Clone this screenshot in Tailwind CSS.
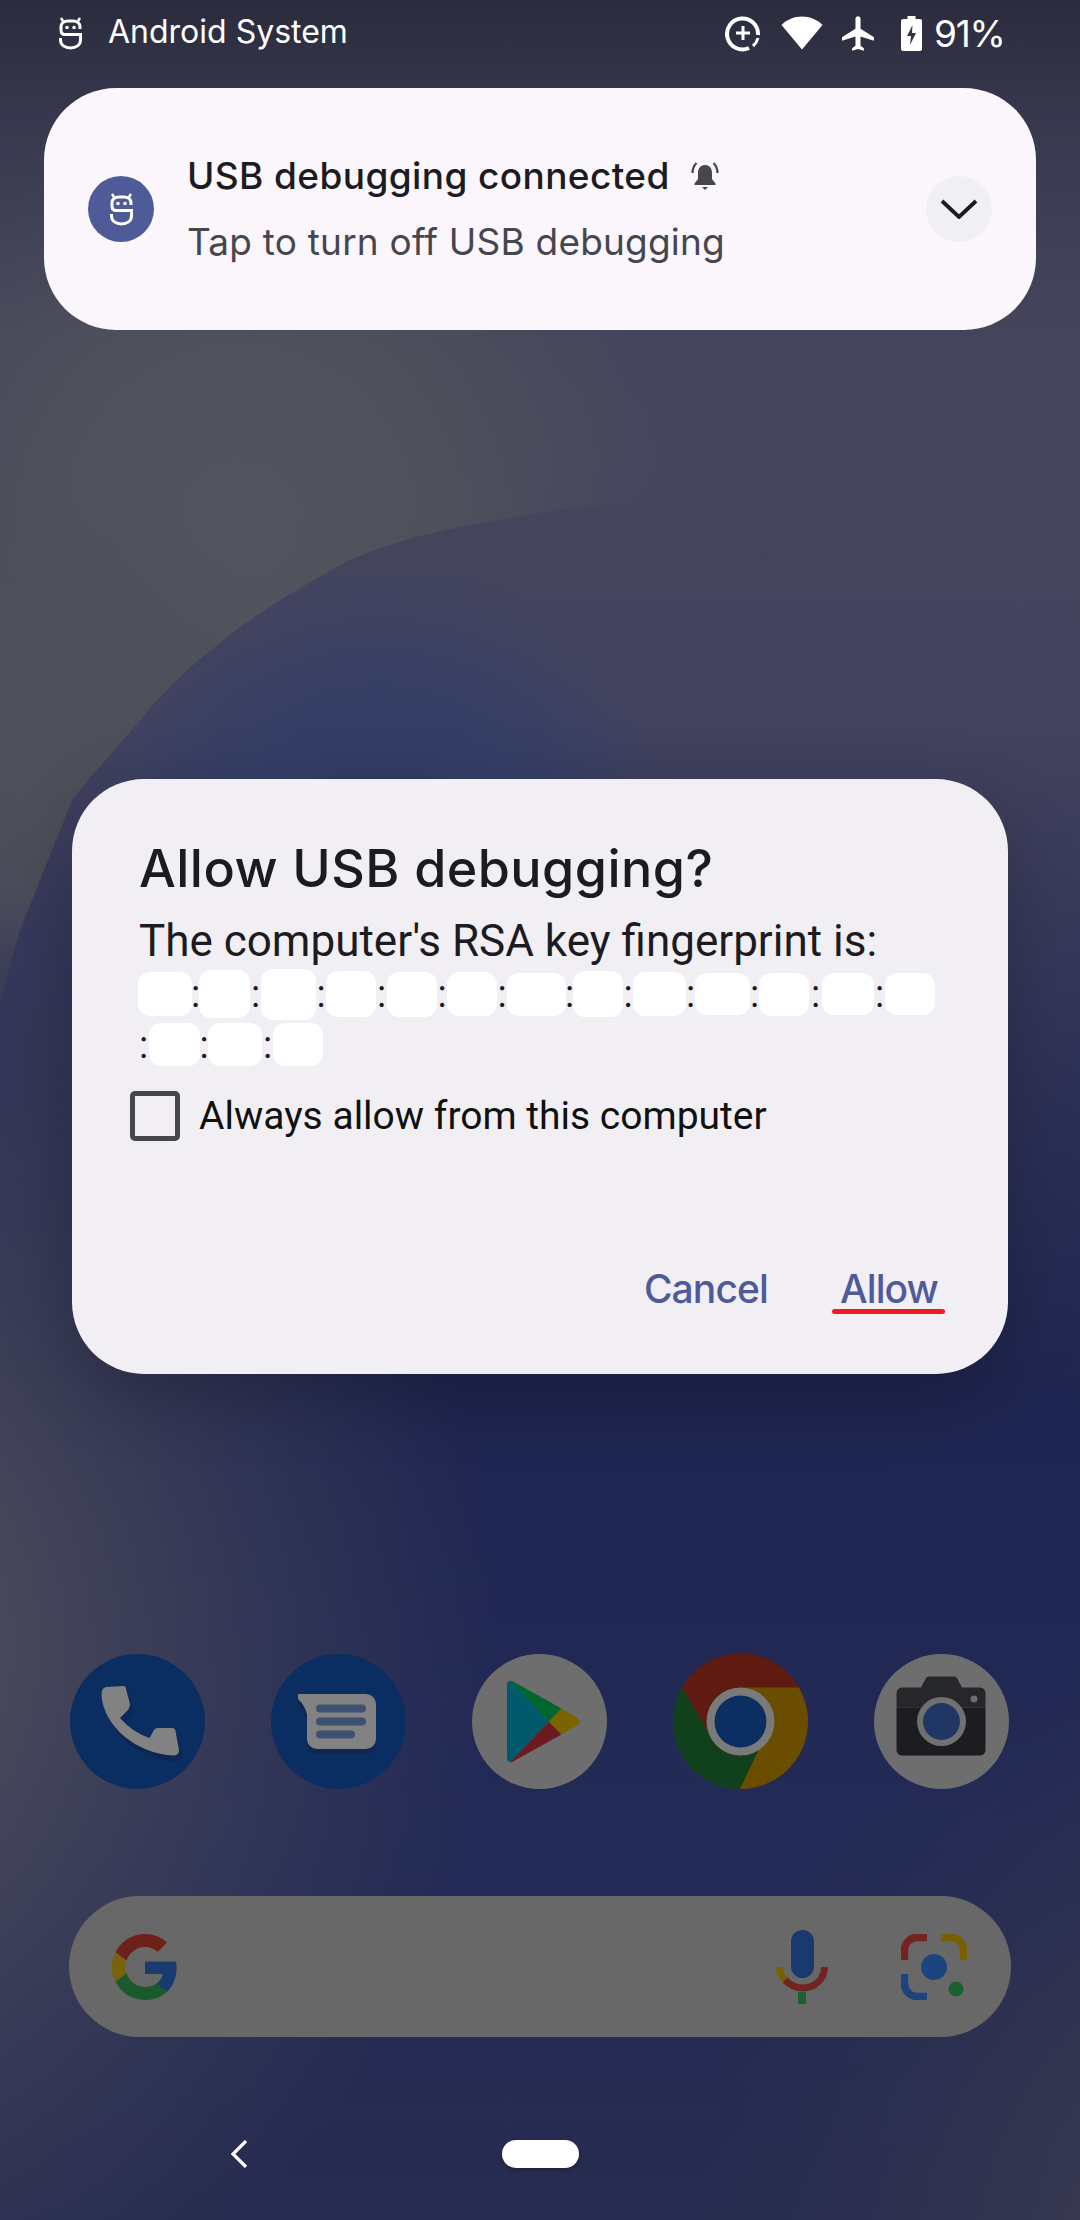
<!DOCTYPE html>
<html lang="en">
<head>
<meta charset="UTF-8">
<meta name="viewport" content="width=device-width, initial-scale=1.0">
<title>Allow USB debugging</title>
<script src="https://cdn.jsdelivr.net/npm/@tailwindcss/browser@4"></script>
</head>
<body class="bg-[#2b2f55]">
<div class="relative w-[1080px] h-[2220px] overflow-hidden font-['Roboto',sans-serif]">

  <!-- wallpaper with scrim -->
  <svg class="absolute inset-0" width="1080" height="2220" viewBox="0 0 1080 2220">
    <defs>
      <linearGradient id="base" x1="0" y1="0" x2="0" y2="1">
        <stop offset="0" stop-color="#42435a"/>
        <stop offset="0.2" stop-color="#45465c"/>
        <stop offset="0.33" stop-color="#42425e"/>
        <stop offset="0.5" stop-color="#2c3056"/>
        <stop offset="0.63" stop-color="#1e2550"/>
        <stop offset="0.82" stop-color="#222a56"/>
        <stop offset="1" stop-color="#272c50"/>
      </linearGradient>
      <linearGradient id="top" x1="0" y1="0" x2="0" y2="1">
        <stop offset="0" stop-color="#2a2b3c"/>
        <stop offset="0.35" stop-color="#2f3044" stop-opacity="0.6"/>
        <stop offset="1" stop-color="#3a3b50" stop-opacity="0"/>
      </linearGradient>
      <radialGradient id="grey" cx="240" cy="520" r="560" gradientUnits="userSpaceOnUse">
        <stop offset="0" stop-color="#54545e"/>
        <stop offset="0.35" stop-color="#52525c" stop-opacity="0.9"/>
        <stop offset="0.8" stop-color="#4c4d5d" stop-opacity="0"/>
      </radialGradient>
      <radialGradient id="greyLow" cx="30" cy="750" r="280" gradientUnits="userSpaceOnUse">
        <stop offset="0" stop-color="#50505a"/>
        <stop offset="0.5" stop-color="#50505a" stop-opacity="0.8"/>
        <stop offset="1" stop-color="#50505a" stop-opacity="0"/>
      </radialGradient>
      <radialGradient id="blue" cx="380" cy="880" r="320" gradientUnits="userSpaceOnUse">
        <stop offset="0" stop-color="#303a68"/>
        <stop offset="0.6" stop-color="#343e68" stop-opacity="0.8"/>
        <stop offset="1" stop-color="#3a4268" stop-opacity="0"/>
      </radialGradient>
      <radialGradient id="edgeL" cx="-260" cy="1640" r="760" gradientUnits="userSpaceOnUse">
        <stop offset="0.3" stop-color="#4a4a5a"/>
        <stop offset="1" stop-color="#45455a" stop-opacity="0"/>
      </radialGradient>
      <radialGradient id="edgeR" cx="1320" cy="2240" r="620" gradientUnits="userSpaceOnUse">
        <stop offset="0.3" stop-color="#3a3a50"/>
        <stop offset="1" stop-color="#30324e" stop-opacity="0"/>
      </radialGradient>
      <clipPath id="curve">
        <path d="M0 0 H1080 V470 C700 490 450 510 344 563 C275 600 200 650 151 707 C120 745 95 770 72 800 L20 930 L0 1000 Z"/>
      </clipPath>
    </defs>
    <rect width="1080" height="2220" fill="url(#base)"/>
    <rect width="1080" height="2220" fill="url(#blue)"/>
    <rect width="1080" height="2220" fill="url(#grey)" clip-path="url(#curve)"/>
    <rect width="1080" height="2220" fill="url(#greyLow)" clip-path="url(#curve)"/>
    <rect width="1080" height="2220" fill="url(#edgeL)"/>
    <rect width="1080" height="2220" fill="url(#edgeR)"/>
    <rect width="1080" height="340" fill="url(#top)"/>
  </svg>

  <div class="relative flex flex-col">
    <!-- status bar -->
    <div class="h-[66px] flex items-center text-white">
      <svg class="ml-[58px] mt-[1px]" width="25" height="33" viewBox="0 0 25 33" fill="none" stroke="#fff" stroke-width="3">
        <path d="M22 12 V10 C22 6 19 4 15 4 H10 C6 4 3 6 3 10 V13 C3 16 4.500 17.500 7 17.500 H22.500 V23 C22.500 28 18 31 12.500 31 C7 31 2.500 28 2.500 23 V21"/>
        <path d="M3 1 L5 4 M22 1 L20 4" stroke-width="2.500"/>
        <circle cx="9" cy="10.500" r="1.800" fill="#fff" stroke="none"/>
        <circle cx="16" cy="10.500" r="1.800" fill="#fff" stroke="none"/>
      </svg>
      <span class="ml-[25px] mb-[3px] text-[32px] leading-none font-['Inter',sans-serif] w-[238px] whitespace-nowrap">Android System</span>
      <svg class="ml-[379px]" width="36" height="38" viewBox="0 0 36 38" fill="none" stroke="#fff" stroke-width="4">
        <path d="M33 21 A15.500 15.500 0 1 0 24 34"/>
        <path d="M33 24 A15.500 15.500 0 0 1 28 32" stroke-width="3"/>
        <path d="M18 12 V26 M11 19 H25" stroke-width="3"/>
      </svg>
      <svg class="ml-[20px]" width="42" height="34" viewBox="0 0 42 34">
        <path d="M21 33.500 L0.500 9 C6 3.500 13 0.500 21 0.500 C29 0.500 36 3.500 41.500 9 Z" fill="#fff"/>
      </svg>
      <svg class="ml-[19px]" width="32" height="35" viewBox="2.500 2 19 20.500">
        <path d="M21.500 16.500 v-2 l-8-5 V3.500 c0-.83-.67-1.500-1.500-1.500 s-1.500.67-1.500 1.500 V9.500 l-8 5 v2 l8-2.500 V19.500 l-2 1.500 v1.500 l3.500-1 3.500 1 V21 l-2-1.500 V14 z" fill="#fff"/>
      </svg>
      <svg class="ml-[27px]" width="21" height="35" viewBox="0 0 21 35">
        <path d="M6.500 0 H14.500 V3 H19 a2 2 0 0 1 2 2 V33 a2 2 0 0 1-2 2 H2 a2 2 0 0 1-2-2 V5 a2 2 0 0 1 2-2 H6.500 Z" fill="#fff"/>
        <path d="M11.500 9 L6 20 H10 L9 29 L15 17 H11 Z" fill="#32344a"/>
      </svg>
      <span class="ml-[12px] text-[37px] leading-none font-['Inter',sans-serif] tracking-[-1.200px]">91%</span>
    </div>

    <!-- notification -->
    <div class="mt-[22px] mx-[44px] h-[242px] rounded-[72px] bg-[#faf6fb] flex items-center">
      <div class="ml-[44px] w-[66px] h-[66px] rounded-full bg-[#4f5b99] flex items-center justify-center">
        <svg width="25" height="33" viewBox="0 0 25 33" fill="none" stroke="#fff" stroke-width="3">
          <path d="M22 12 V10 C22 6 19 4 15 4 H10 C6 4 3 6 3 10 V13 C3 16 4.500 17.500 7 17.500 H22.500 V23 C22.500 28 18 31 12.500 31 C7 31 2.500 28 2.500 23 V21"/>
          <path d="M3 1 L5 4 M22 1 L20 4" stroke-width="2.500"/>
          <circle cx="9" cy="10.500" r="1.800" fill="#fff" stroke="none"/>
          <circle cx="16" cy="10.500" r="1.800" fill="#fff" stroke="none"/>
        </svg>
      </div>
      <div class="ml-[33px] flex-1 flex flex-col gap-[22px]">
        <div class="flex items-center">
          <span class="text-[37px] leading-[44px] font-medium text-[#1c1b1f] font-['Inter',sans-serif] tracking-[0.400px]">USB debugging connected</span>
          <svg class="ml-[20px]" width="30" height="30" viewBox="0 0 30 30">
            <path d="M15 4 C10 4 8 8 8 12 V18 L4.500 22.500 V24 H25.500 V22.500 L22 18 V12 C22 8 20 4 15 4 Z" fill="#46464f"/>
            <path d="M12 26 H18 L15 29 Z" fill="#46464f"/>
            <path d="M6.500 2 C3.500 5 2.500 8 2.500 12 M23.500 2 C26.500 5 27.500 8 27.500 12" fill="none" stroke="#46464f" stroke-width="2.200"/>
          </svg>
        </div>
        <span class="text-[37px] leading-[44px] text-[#46464f] font-['Inter',sans-serif] tracking-[0.200px]">Tap to turn off USB debugging</span>
      </div>
      <div class="mr-[44px] w-[66px] h-[66px] rounded-full bg-[#f0eff3] flex items-center justify-center">
        <svg width="38" height="20" viewBox="0 0 38 20" fill="none" stroke="#1c1b1f" stroke-width="3.800">
          <path d="M2 2 L19 18 L36 2"/>
        </svg>
      </div>
    </div>

    <!-- dialog -->
    <div class="mt-[449px] mx-[72px] h-[595px] rounded-[72px] bg-[#f1eff3] shadow-[0_20px_70px_rgba(0,0,0,0.22)] flex flex-col">
      <h1 class="ml-[67px] mt-[60px] text-[52px] leading-[60px] font-medium text-[#1c1b1f] font-['Inter',sans-serif] tracking-[0.450px]">Allow USB debugging?</h1>
      <p class="ml-[67px] mt-[16px] text-[44px] leading-[52px] text-[#1c1b1f] whitespace-nowrap">The computer's RSA key fingerprint is:</p>
      <div class="ml-[66px] mt-[1px] h-[52px] flex items-center text-[#1c1b1f] text-[38px] leading-none">
        <div class="w-[54px] h-[44px] rounded-[12px] bg-white"></div>
        <span class="w-[7px] flex justify-center">:</span>
        <div class="w-[51px] h-[48px] rounded-[12px] bg-white"></div>
        <span class="w-[11px] flex justify-center">:</span>
        <div class="w-[55px] h-[51px] rounded-[12px] bg-white"></div>
        <span class="w-[10px] flex justify-center">:</span>
        <div class="w-[50px] h-[46px] rounded-[12px] bg-white"></div>
        <span class="w-[11px] flex justify-center">:</span>
        <div class="w-[50px] h-[45px] rounded-[12px] bg-white"></div>
        <span class="w-[10px] flex justify-center">:</span>
        <div class="w-[50px] h-[44px] rounded-[12px] bg-white"></div>
        <span class="w-[10px] flex justify-center">:</span>
        <div class="w-[59px] h-[43px] rounded-[12px] bg-white"></div>
        <span class="w-[7px] flex justify-center">:</span>
        <div class="w-[50px] h-[46px] rounded-[12px] bg-white"></div>
        <span class="w-[10px] flex justify-center">:</span>
        <div class="w-[53px] h-[44px] rounded-[12px] bg-white"></div>
        <span class="w-[9px] flex justify-center">:</span>
        <div class="w-[55px] h-[42px] rounded-[12px] bg-white"></div>
        <span class="w-[9px] flex justify-center">:</span>
        <div class="w-[50px] h-[43px] rounded-[12px] bg-white"></div>
        <span class="w-[13px] flex justify-center">:</span>
        <div class="w-[52px] h-[42px] rounded-[12px] bg-white"></div>
        <span class="w-[11px] flex justify-center">:</span>
        <div class="w-[50px] h-[42px] rounded-[12px] bg-white"></div>
      </div>
      <div class="ml-[66px] mt-[3px] h-[43px] flex items-center text-[#1c1b1f] text-[38px] leading-none">
        <span class="w-[11px] flex justify-center">:</span>
        <div class="w-[51px] h-[43px] rounded-[12px] bg-white"></div>
        <span class="w-[8px] flex justify-center">:</span>
        <div class="w-[54px] h-[43px] rounded-[12px] bg-white"></div>
        <span class="w-[11px] flex justify-center">:</span>
        <div class="w-[50px] h-[43px] rounded-[12px] bg-white"></div>
      </div>
      <div class="ml-[58px] mt-[25px] h-[50px] flex items-center">
        <div class="w-[50px] h-[50px] rounded-[5px] border-[5px] border-[#46464f]"></div>
        <span class="ml-[19px] text-[39px] leading-[46px] text-[#111]">Always allow from this computer</span>
      </div>
      <div class="mt-[125px] flex justify-end mr-[70px]">
        <button class="mr-[72px] text-[39px] leading-[46px] font-medium text-[#4f5b99] font-['Inter',sans-serif] tracking-[-0.900px]">Cancel</button>
        <button class="relative text-[39px] leading-[46px] font-medium text-[#4f5b99] font-['Inter',sans-serif] tracking-[-0.900px]">Allow
          <span class="absolute left-[-8px] right-[-7px] top-[43px] h-[5px] rounded-full bg-[#ed1c24]"></span>
        </button>
      </div>
    </div>

    <!-- dock -->
    <div class="mt-[280px] ml-[70px] flex gap-[66px]">
      <svg width="135" height="135" viewBox="0 0 135 135">
        <circle cx="67.500" cy="67.500" r="67.500" fill="#0a2e62"/>
        <path transform="translate(3 6)" d="M36 33 L53 32 Q56 32 56 35 L60 50 Q60 53 58 56 L50 64 Q62 78 79.500 84 L84 76 Q85 74 88 74 L102 74 Q105 74 105.500 77 L109 96 Q109 101 104 101.500 C66 100 34 72 31.500 42 Q31 34 36 33 Z" fill="#0c2550" opacity="0.8"/>
        <path d="M36 33 L53 32 Q56 32 56 35 L60 50 Q60 53 58 56 L50 64 Q62 78 79.500 84 L84 76 Q85 74 88 74 L102 74 Q105 74 105.500 77 L109 96 Q109 101 104 101.500 C66 100 34 72 31.500 42 Q31 34 36 33 Z" fill="#828282"/>
      </svg>
      <svg width="135" height="135" viewBox="0 0 135 135">
        <circle cx="67.500" cy="67.500" r="67.500" fill="#0a2e62"/>
        <path d="M27 45 H95 a10 10 0 0 1 10 10 V90 a10 10 0 0 1-10 10 H46 a10 10 0 0 1-10-10 V65 Q33 55 27 50 Z" fill="#10264f" opacity="0.8"/>
        <path d="M27 40 H95 a10 10 0 0 1 10 10 V85 a10 10 0 0 1-10 10 H46 a10 10 0 0 1-10-10 V60 Q33 50 27 45 Z" fill="#828282"/>
        <rect x="45" y="50.500" width="50" height="8" rx="4" fill="#3d5170"/>
        <rect x="45" y="63.500" width="50" height="8" rx="4" fill="#3d5170"/>
        <rect x="45" y="76.500" width="39" height="8" rx="4" fill="#3d5170"/>
      </svg>
      <svg width="135" height="135" viewBox="0 0 135 135">
        <circle cx="67.500" cy="67.500" r="67.500" fill="#6e6e6e"/>
        <path d="M35 30 V104 Q35 108 38 108 L77 67.500 L38 27 Q35 27 35 30 Z" fill="#005a6b"/>
        <path d="M38 27 Q39 26 41 27.500 L89.500 54.500 L77 67.500 Z" fill="#00662f"/>
        <path d="M38 108 Q39 109 41 107.500 L89.500 80.500 L77 67.500 Z" fill="#6b1a20"/>
        <path d="M89.500 54.500 L105 63.500 Q110.500 67.500 105 71.500 L89.500 80.500 L77 67.500 Z" fill="#7a6400"/>
      </svg>
      <svg width="135" height="135" viewBox="0 0 135 135">
        <circle cx="67.500" cy="67.500" r="67.500" fill="#6b4d00"/>
        <path d="M9 33.500 A67.500 67.500 0 0 0 67 135 L89 89 L34 75 Z" fill="#10401c"/>
        <path d="M9 33.500 A67.500 67.500 0 0 1 126.500 33.500 H67.500 L34 75 Z" fill="#5f1a12"/>
        <circle cx="67.500" cy="67.500" r="34" fill="#7a7a7a"/>
        <circle cx="67.500" cy="67.500" r="26" fill="#0b2f63"/>
      </svg>
      <svg width="135" height="135" viewBox="0 0 135 135">
        <circle cx="67.500" cy="67.500" r="67.500" fill="#6e6e6e"/>
        <path d="M28 33.500 H47 L52 24 Q53 22.500 55 22.500 H80 Q82 22.500 83 24 L88 33.500 H106 a5.500 5.500 0 0 1 5.500 5.500 V53.500 H22.500 V39 a5.500 5.500 0 0 1 5.500-5.500 Z" fill="#26272a"/>
        <path d="M22.500 53.500 H111.500 V96 a5.500 5.500 0 0 1-5.500 5.500 H28 a5.500 5.500 0 0 1-5.500-5.500 Z" fill="#1c1d20"/>
        <circle cx="67.500" cy="67.500" r="24.500" fill="#707070"/>
        <circle cx="67.500" cy="67.500" r="18.500" fill="#203766"/>
        <circle cx="100" cy="45" r="3.500" fill="#6e6e6e"/>
      </svg>
    </div>

    <!-- search bar -->
    <div class="mt-[107px] mx-[69px] h-[141px] rounded-full bg-[#686868] flex items-center">
      <svg class="ml-[43px]" width="66" height="66" viewBox="0 0 48 48">
        <path fill="#6e201a" d="M24 9.500c3.540 0 6.710 1.220 9.210 3.600l6.850-6.850C35.900 2.380 30.470 0 24 0 14.620 0 6.510 5.380 2.560 13.220l7.980 6.190C12.430 13.720 17.740 9.500 24 9.500z"/>
        <path fill="#1a3b70" d="M46.980 24.550c0-1.570-.150-3.090-.380-4.550H24v9.020h12.940c-.580 2.960-2.260 5.480-4.780 7.180l7.730 6c4.510-4.180 7.090-10.360 7.090-17.650z"/>
        <path fill="#7a6208" d="M10.530 28.590c-.500-1.450-.780-2.990-.780-4.590s.270-3.140.780-4.590l-7.980-6.190C.920 16.460 0 20.120 0 24c0 3.880.920 7.540 2.560 10.780l7.970-6.190z"/>
        <path fill="#1a5a2c" d="M24 48c6.480 0 11.930-2.130 15.890-5.810l-7.730-6c-2.150 1.450-4.920 2.300-8.160 2.300-6.260 0-11.570-4.220-13.470-9.910l-7.980 6.190C6.510 42.620 14.620 48 24 48z"/>
      </svg>
      <svg class="ml-auto" width="52" height="74" viewBox="0 0 52 74">
        <rect x="15" y="0" width="23" height="48" rx="11.500" fill="#1a3a6e"/>
        <rect x="22" y="62" width="8" height="12" fill="#1a6030"/>
        <path d="M3.500 37 C3.500 42 5 46 9 50" fill="none" stroke="#7a5f00" stroke-width="7"/>
        <path d="M9 50 C13 54 19 58 26 58 C39 58 48.500 49 48.500 37" fill="none" stroke="#722420" stroke-width="7"/>
      </svg>
      <svg class="ml-[73px] mr-[44px]" width="66" height="66" viewBox="0 0 66 66" fill="none" stroke-width="7.500">
        <path d="M3.500 26 V16 A12.500 12.500 0 0 1 16 3.500 H26" stroke="#722420"/>
        <path d="M40 3.500 H50 A12.500 12.500 0 0 1 62.500 16 V26" stroke="#7a5f00"/>
        <path d="M3.500 40 V50 A12.500 12.500 0 0 0 16 62.500 H26" stroke="#1c4580"/>
        <circle cx="33" cy="33" r="13" fill="#1c4580" stroke="none"/>
        <circle cx="55" cy="55" r="7.500" fill="#1a6030" stroke="none"/>
      </svg>
    </div>

    <!-- nav bar -->
    <div class="mt-[103px] h-[28px] flex items-center">
      <svg class="ml-[230px]" width="18" height="28" viewBox="0 0 18 28" fill="none" stroke="#fff" stroke-width="3.200">
        <path d="M16 1 L3 14 L16 27"/>
      </svg>
      <div class="ml-[254px] w-[77px] h-[28px] rounded-full bg-white shadow-[0_2px_4px_rgba(0,0,0,0.25)]"></div>
    </div>
  </div>
</div>
</body>
</html>
